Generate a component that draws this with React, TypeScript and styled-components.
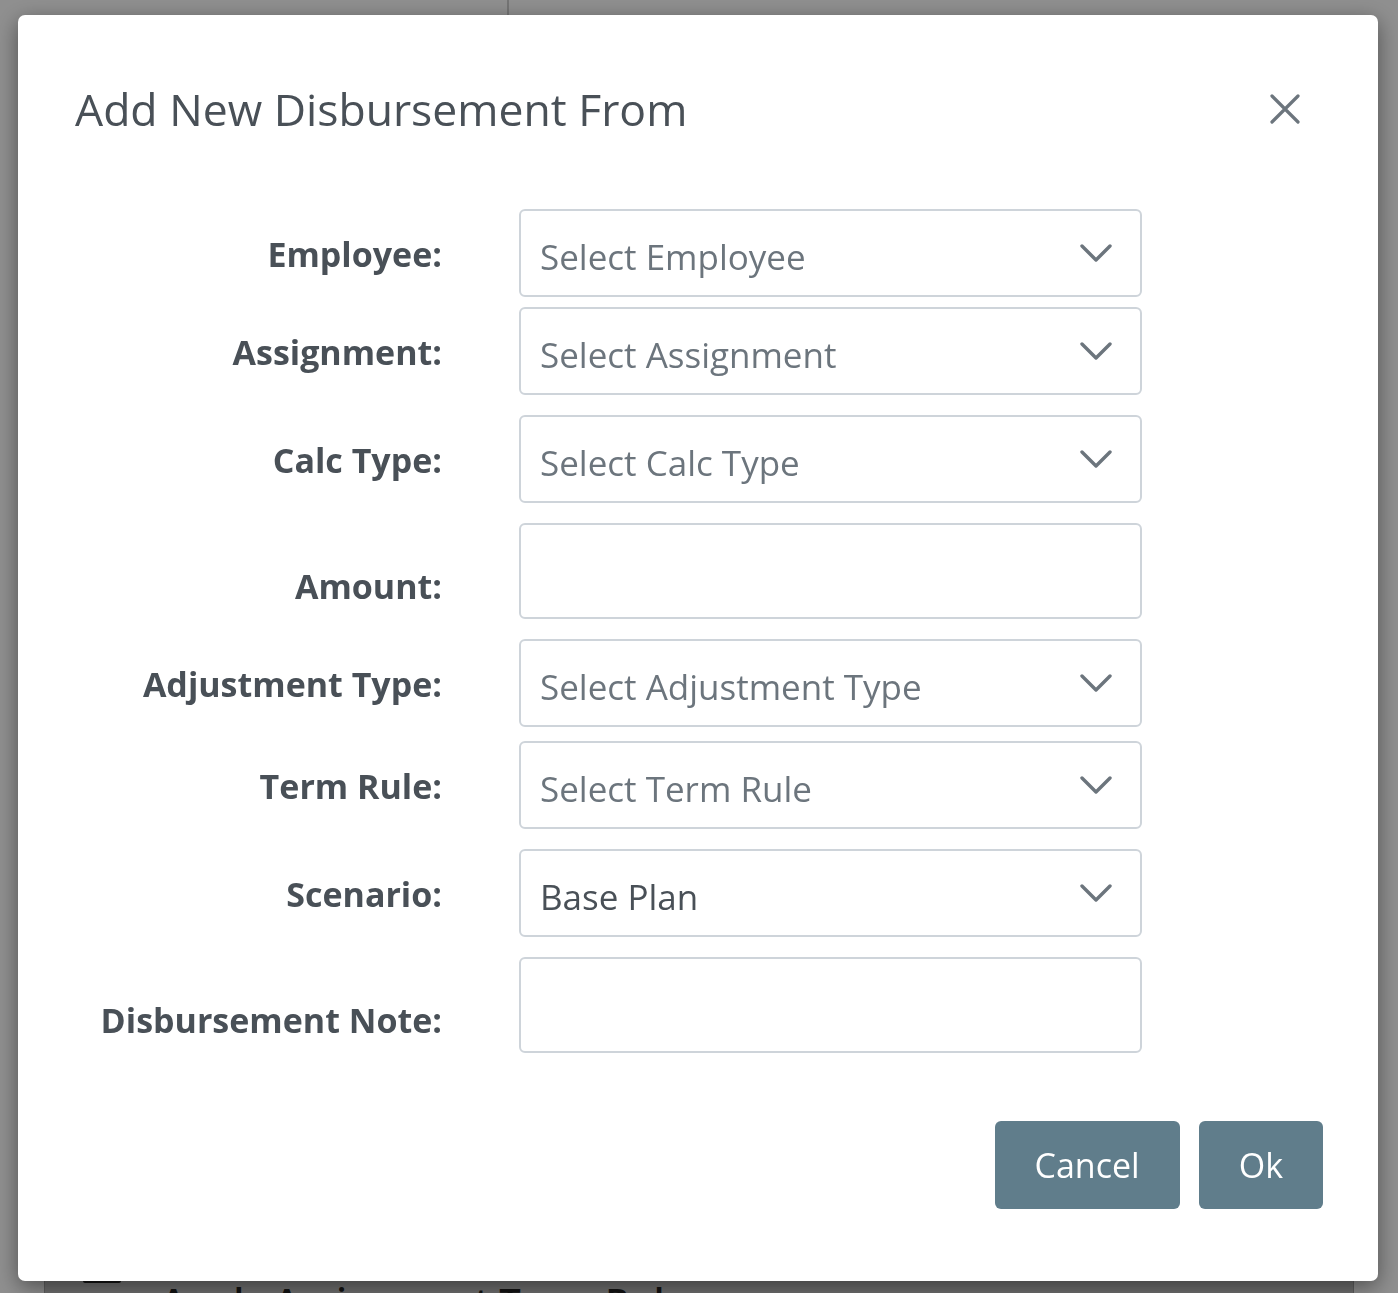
import React, { FC } from 'react'
import styled, { createGlobalStyle } from 'styled-components'

const GlobalStyle = createGlobalStyle`
  html, body {
    margin: 0;
    height: 100%;
    overflow: hidden;
  }
  body {
    font-family: "Open Sans", "Noto Sans", "Liberation Sans", sans-serif;
    background: #fff;
  }
`

const Page = styled.div`
  height: 100vh;
  display: flex;
  flex-direction: column;
  justify-content: space-between;
`

const TopBar = styled.div`
  height: 40px;
  display: flex;
`

const TopSection = styled.div`
  width: 507px;
  border-right: 2px solid #d0d0d0;
`

const BottomPanel = styled.div`
  margin: 0 44px;
  height: 40px;
  background: #c4c4c4;
  border-left: 1px solid #a8a8a8;
  border-right: 1px solid #a8a8a8;
  display: flex;
  align-items: flex-start;
  gap: 40px;
  padding: 29px 0 0 38px;
  box-sizing: border-box;
`

const MenuBars = styled.div`
  width: 38px;
  height: 5px;
  margin-top: -4px;
  background: #222;
  border-radius: 2px;
`

const PanelText = styled.div`
  font-size: 38px;
  font-weight: 600;
  color: #222;
  line-height: 1;
`

const Backdrop = styled.div`
  position: fixed;
  inset: 0;
  background: rgba(0, 0, 0, 0.44);
  display: flex;
  padding: 15px 20px 12px 18px;
  box-sizing: border-box;
`

const Modal = styled.div`
  flex: 1;
  background: #fff;
  border-radius: 7px;
  box-shadow: 0 6px 22px rgba(0, 0, 0, 0.45);
  display: flex;
  flex-direction: column;
  padding: 67px 78px 0 57px;
  box-sizing: border-box;
`

const Header = styled.div`
  display: flex;
  justify-content: space-between;
  align-items: center;
`

const Title = styled.h4`
  margin: 0;
  font-size: 44.5px;
  font-weight: 400;
  line-height: 1.2;
  color: #495057;
`

const CloseButton = styled.button`
  border: 0;
  background: transparent;
  padding: 0;
  width: 30px;
  height: 30px;
  display: flex;
  cursor: pointer;
`

const Form = styled.div`
  margin-top: 74px;
  display: flex;
  flex-direction: column;
`

const Row = styled.div<{ $space: number }>`
  display: grid;
  grid-template-columns: 367px 623px;
  column-gap: 77px;
  align-items: center;
  margin-top: ${p => p.$space}px;
`

const Label = styled.label<{ $drop?: boolean }>`
  text-align: right;
  font-size: 34px;
  font-weight: 700;
  color: #495057;
  padding-top: ${p => (p.$drop ? 30 : 2)}px;
`

const SelectBox = styled.div<{ $filled?: boolean }>`
  height: 88px;
  box-sizing: border-box;
  border: 2px solid #ced4da;
  border-radius: 6px;
  background: #fff;
  display: flex;
  align-items: center;
  justify-content: space-between;
  padding: 0 28px 0 19px;
  font-size: 35px;
  color: ${p => (p.$filled ? '#495057' : '#6c757d')};

  span {
    padding-top: 6px;
  }
`

const TextBox = styled.div`
  height: 96px;
  box-sizing: border-box;
  border: 2px solid #ced4da;
  border-radius: 6px;
  background: #fff;
`

const Footer = styled.div`
  margin-top: 68px;
  display: flex;
  justify-content: flex-end;
  gap: 19px;
  margin-right: -23px;
`

const Button = styled.button`
  height: 88px;
  padding: 0 40px;
  border: 0;
  border-radius: 6px;
  background: #607d8b;
  color: #fff;
  font-family: inherit;
  font-size: 34px;
  cursor: pointer;
`

const Chevron: FC = () => (
  <svg width="32" height="18" viewBox="0 0 32 18" fill="none">
    <polyline
      points="2,2 16,16 30,2"
      stroke="#6c757d"
      strokeWidth="3.4"
      strokeLinecap="round"
      strokeLinejoin="round"
    />
  </svg>
)

const CloseIcon: FC = () => (
  <svg width="30" height="30" viewBox="0 0 30 30" fill="none">
    <path
      d="M2 2 L28 28 M28 2 L2 28"
      stroke="#6c757d"
      strokeWidth="3.2"
      strokeLinecap="round"
    />
  </svg>
)

interface Field {
  label: string
  kind: 'select' | 'text'
  placeholder?: string
  value?: string
  space: number
}

const fields: Field[] = [
  { label: 'Employee:', kind: 'select', placeholder: 'Select Employee', space: 0 },
  { label: 'Assignment:', kind: 'select', placeholder: 'Select Assignment', space: 10 },
  { label: 'Calc Type:', kind: 'select', placeholder: 'Select Calc Type', space: 20 },
  { label: 'Amount:', kind: 'text', space: 20 },
  { label: 'Adjustment Type:', kind: 'select', placeholder: 'Select Adjustment Type', space: 20 },
  { label: 'Term Rule:', kind: 'select', placeholder: 'Select Term Rule', space: 14 },
  { label: 'Scenario:', kind: 'select', value: 'Base Plan', space: 20 },
  { label: 'Disbursement Note:', kind: 'text', space: 20 },
]

const App: FC = () => {
  return (
    <>
      <GlobalStyle />
      <Page>
        <TopBar>
          <TopSection />
        </TopBar>
        <BottomPanel>
          <MenuBars />
          <PanelText>Apply Assignment Term Rule</PanelText>
        </BottomPanel>
      </Page>
      <Backdrop>
        <Modal>
          <Header>
            <Title>Add New Disbursement From</Title>
            <CloseButton aria-label="Close">
              <CloseIcon />
            </CloseButton>
          </Header>
          <Form>
            {fields.map(field => (
              <Row key={field.label} $space={field.space}>
                <Label $drop={field.kind === 'text'}>{field.label}</Label>
                {field.kind === 'select' ? (
                  <SelectBox $filled={!!field.value}>
                    <span>{field.value || field.placeholder}</span>
                    <Chevron />
                  </SelectBox>
                ) : (
                  <TextBox />
                )}
              </Row>
            ))}
          </Form>
          <Footer>
            <Button>Cancel</Button>
            <Button>Ok</Button>
          </Footer>
        </Modal>
      </Backdrop>
    </>
  )
}

export default App
